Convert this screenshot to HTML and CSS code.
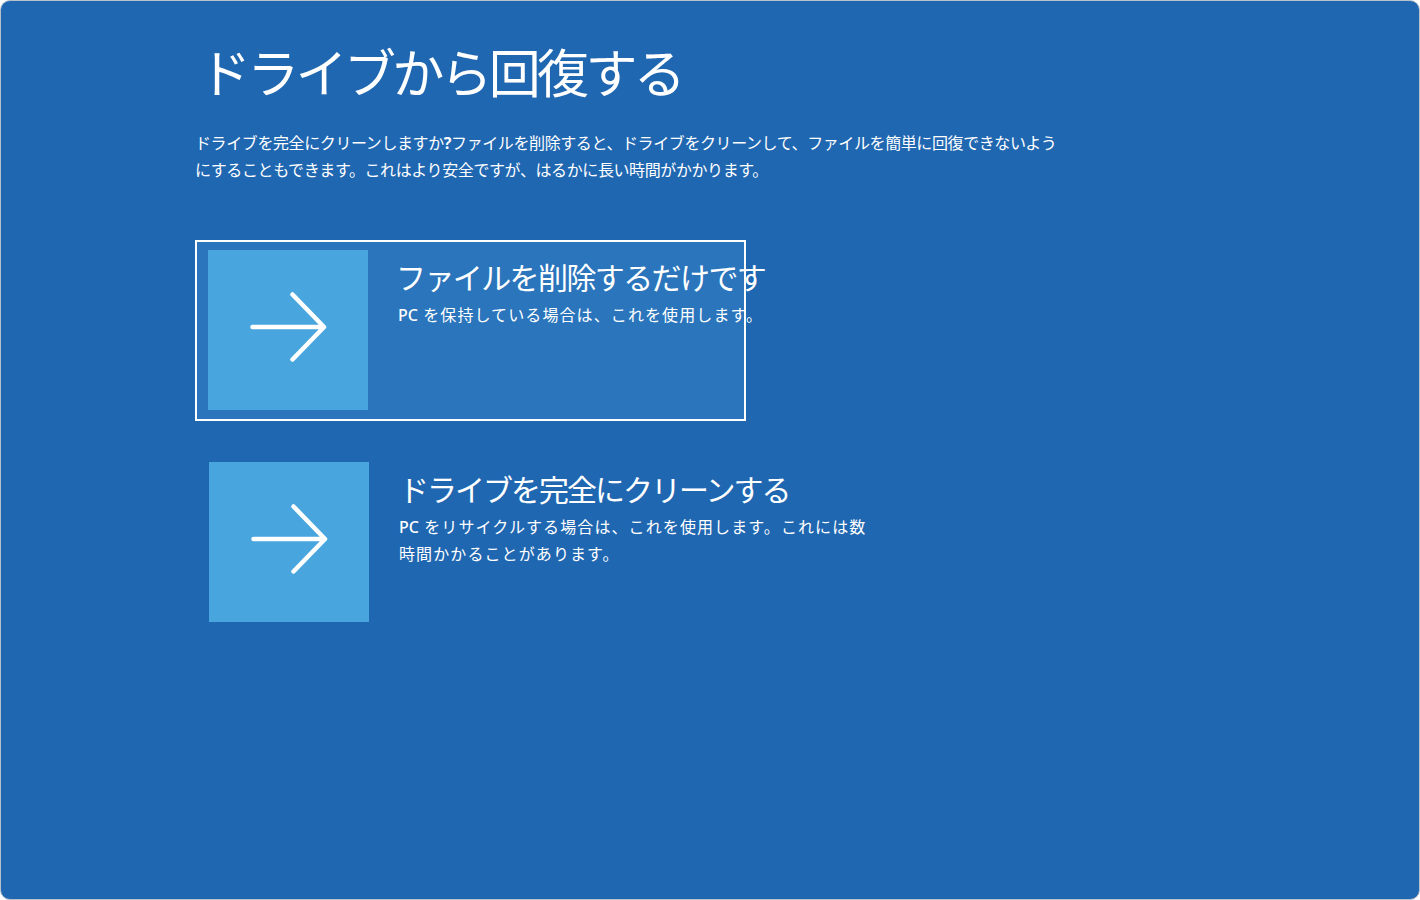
FILE: index.html
```html
<!DOCTYPE html>
<html lang="ja">
<head>
<meta charset="utf-8">
<title>ドライブから回復する</title>
<link rel="stylesheet" href="styles.css">
</head>
<body>
<div class="window">
  <div class="content">
    <h1 class="title">ドライブから回復する</h1>
    <p class="desc">ドライブを完全にクリーンしますか<span class="q">?</span>ファイルを削除すると、ドライブをクリーンして、ファイルを簡単に回復できないよう<br>にすることもできます。これはより安全ですが、はるかに長い時間がかかります。</p>
    <div class="options">
      <div class="option selected">
        <div class="tile">
          <svg class="arrow" viewBox="0 0 160 160" width="160" height="160"><path d="M44.5 77 H116 M84.5 44.5 L116 77 L84.5 109.5" fill="none" stroke="#fff" stroke-width="4.5" stroke-linecap="round" stroke-linejoin="round"/></svg>
        </div>
        <div class="text">
          <div class="opt-title first">ファイルを削除するだけです</div>
          <div class="opt-sub"><span class="pc">PC</span> を保持している場合は、これを使用します。</div>
        </div>
      </div>
      <div class="option">
        <div class="tile">
          <svg class="arrow" viewBox="0 0 160 160" width="160" height="160"><path d="M44.5 77 H116 M84.5 44.5 L116 77 L84.5 109.5" fill="none" stroke="#fff" stroke-width="4.5" stroke-linecap="round" stroke-linejoin="round"/></svg>
        </div>
        <div class="text">
          <div class="opt-title">ドライブを完全にクリーンする</div>
          <div class="opt-sub"><span class="pc">PC</span> をリサイクルする場合は、これを使用します。これには数時間かかることがあります。</div>
        </div>
      </div>
    </div>
  </div>
</div>
</body>
</html>
```
FILE: styles.css
```css
* { box-sizing: border-box; }
html, body {
  margin: 0;
  padding: 0;
  background: #ffffff;
}
body {
  font-family: "Noto Sans", "Noto Sans CJK JP", sans-serif;
  color: #ffffff;
}
.window {
  width: 1420px;
  height: 900px;
  border: 1px solid #b9c2cc;
  border-radius: 10px;
  background: #2067b1;
  overflow: hidden;
}
.content {
  padding: 37px 0 0 194px;
}
.title {
  margin: 0;
  font-weight: 400;
  font-size: 52px;
  line-height: 70px;
  letter-spacing: -3.7px;
  padding-left: 4px;
  white-space: nowrap;
}
.desc {
  margin: 22px 0 0 0;
  font-size: 16px;
  line-height: 27px;
  letter-spacing: -0.4px;
  white-space: nowrap;
}
.desc .q { font-weight: 700; }
.options {
  margin-top: 56px;
  display: flex;
  flex-direction: column;
  gap: 31px;
}
.option {
  width: 551px;
  height: 181px;
  border: 2px solid transparent;
  padding: 8px 0 8px 11px;
  display: flex;
  gap: 30px;
}
.option + .option {
  padding-left: 12px;
}
.option.selected {
  border-color: #ffffff;
  background: #2a75bc;
}
.tile {
  flex: 0 0 160px;
  width: 160px;
  height: 160px;
  background: #49a5dd;
}
.arrow { display: block; }
.text {
  flex: 0 0 472px;
  width: 472px;
  padding-top: 8px;
}
.opt-title {
  font-size: 30px;
  line-height: 40px;
  letter-spacing: -2px;
  white-space: nowrap;
}
.opt-title.first {
  margin-left: -2px;
  letter-spacing: -1.6px;
}
.opt-sub {
  margin-top: 4px;
  font-size: 16px;
  line-height: 27px;
  letter-spacing: 1.1px;
}
.pc { font-weight: 500; letter-spacing: 0; }
```
